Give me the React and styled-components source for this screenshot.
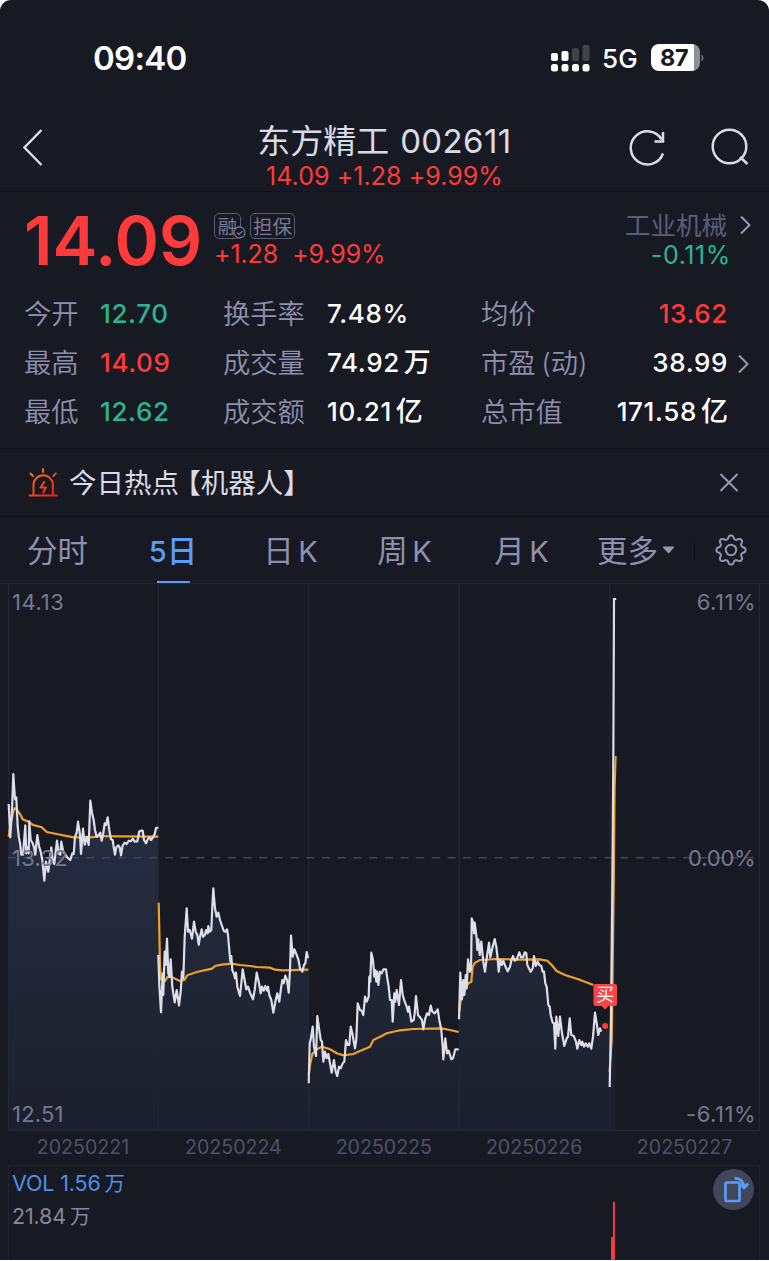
import React from 'react';
import styled, { createGlobalStyle } from 'styled-components';

const GlobalStyle = createGlobalStyle`
  * { box-sizing: border-box; }
  body {
    margin: 0;
    background: #fff;
    font-family: Inter, "Noto Sans CJK SC", sans-serif;
    -webkit-font-smoothing: antialiased;
  }
  svg { display: block; flex: none; }
`;

const colors = {
  bg: '#171a23',
  red: '#ff3a3a',
  green: '#2bb594',
  blue: '#5a9cfa',
  label: '#8f90ad',
  dim: '#5c5d78',
  light: '#d9dbe6',
};

const Page = styled.div`
  width: 769px;
  height: 1260px;
  overflow: hidden;
  background: ${colors.bg};
  border-radius: 11px 11px 0 0;
`;

const StatusBar = styled.header`
  height: 100px;
  padding: 15px 65px 0 93px;
  display: flex;
  align-items: center;
  color: #fff;
`;

const Clock = styled.div`
  font-size: 33px;
  font-weight: 600;
  letter-spacing: -0.7px;
  margin-right: auto;
`;

const Network = styled.div`
  font-size: 26px;
  font-weight: 500;
  margin: 1px 13px 0 12px;
  letter-spacing: 0.3px;
`;

const Battery = styled.div`
  width: 49px;
  height: 27px;
  border-radius: 8px;
  background: linear-gradient(90deg, #fff 87%, #8f9095 87%);
  color: ${colors.bg};
  font-size: 23.5px;
  font-weight: 700;
  line-height: 28px;
  padding-left: 9px;
  letter-spacing: -0.3px;
`;

const NavBar = styled.nav`
  height: 92px;
  padding: 0 20px 0 22px;
  display: grid;
  grid-template-columns: 118px 1fr 120px;
  border-bottom: 1px solid #11131a;
`;

const NavIcons = styled.div`
  display: flex;
  justify-content: ${(p) => p.$justify || 'flex-start'};
  padding-top: 28px;
  gap: 46px;
`;

const Title = styled.div`
  text-align: center;
  padding-top: 20px;
`;

const StockName = styled.div`
  font-size: 33px;
  line-height: 42px;
  color: ${colors.light};
  white-space: nowrap;
  word-spacing: 1.5px;
  span {
    font-size: 33px;
    letter-spacing: 0.4px;
  }
`;

const StockQuote = styled.div`
  color: ${colors.red};
  font-size: 25px;
  line-height: 29px;
  letter-spacing: 0.05px;
`;

const Summary = styled.section`
  height: 257px;
  padding: 0 16px 0 24px;
  border-bottom: 1px solid #11131a;
`;

const Headline = styled.div`
  height: 98px;
  display: flex;
`;

const BigPrice = styled.div`
  width: 190px;
  font-size: 67.5px;
  font-weight: 570;
  line-height: 98px;
  letter-spacing: -0.1px;
  color: ${colors.red};
`;

const Changes = styled.div`
  flex: 1;
  padding-top: 21px;
`;

const Tags = styled.div`
  display: flex;
  gap: 9px;
`;

const Tag = styled.span`
  position: relative;
  height: 26px;
  width: ${(p) => p.$width}px;
  border: 1.5px solid #5a5b75;
  border-radius: 5px;
  text-align: center;
  font-size: 19.5px;
  line-height: 26px;
  color: #777891;
  white-space: nowrap;
`;

const TagCheck = styled.svg`
  position: absolute;
  right: -6px;
  bottom: -1px;
`;

const Delta = styled.div`
  font-size: 25px;
  line-height: 30px;
  letter-spacing: -0.1px;
  color: ${colors.red};
  display: flex;
  gap: 14px;
`;

const SectorDelta = styled(Delta)`
  color: ${colors.green};
  line-height: 26px;
  letter-spacing: 0.6px;
  margin-right: -2px;
`;

const Sector = styled.div`
  display: grid;
  grid-template-columns: auto 23px;
  justify-items: end;
  align-content: start;
  padding: 17px 1px 0 0;
`;

const SectorName = styled.div`
  font-size: 25.5px;
  line-height: 33px;
  margin-right: 2px;
  color: ${colors.dim};
`;

const Stats = styled.div`
  display: grid;
  grid-template-columns: 76px 123px 104px 154px 108px 139px 22px;
  grid-auto-rows: 49px;
  align-items: center;
`;

const StatLabel = styled.div`
  font-size: 27.3px;
  line-height: 49px;
  color: ${colors.label};
  font-weight: 350;
  white-space: nowrap;
  word-spacing: -2px;
`;

const StatValue = styled.div`
  font-size: 26px;
  font-weight: 500;
  line-height: 48px;
  padding-bottom: 1px;
  letter-spacing: 0.65px;
  white-space: nowrap;
  color: ${(p) => colors[p.$tone] || '#fff'};
  text-align: ${(p) => (p.$right ? 'right' : 'left')};
`;

const Unit = styled.span`
  margin-left: 4px;
  font-size: 27px;
  letter-spacing: 0;
`;

const ChevronCell = styled.div`
  justify-self: end;
`;

const HotBar = styled.div`
  height: 68px;
  padding: 0 29px 0 27px;
  display: flex;
  align-items: center;
  border-bottom: 1px solid #11131a;
`;

const HotText = styled.div`
  flex: 1;
  margin-left: 10px;
  font-size: 27.5px;
  line-height: 66px;
  color: ${colors.light};
  font-feature-settings: "halt";
  span { margin-left: 8px; }
`;

const Tabs = styled.div`
  height: 66px;
  display: grid;
  grid-template-columns: 115px 116px 119px 109px 125px 91px 94px;
  align-items: center;
`;

const Tab = styled.div`
  height: 66px;
  text-align: center;
  font-size: 30.5px;
  line-height: 68px;
  white-space: nowrap;
  word-spacing: -4px;
  font-weight: ${(p) => (p.$active ? 500 : 400)};
  color: ${(p) => (p.$active ? colors.blue : colors.label)};
  span { font-size: 29px; }
  &::after {
    content: '';
    display: ${(p) => (p.$active ? 'block' : 'none')};
    width: 33px;
    height: 3px;
    margin: -5px auto 0;
    background: ${colors.blue};
  }
`;

const MoreTab = styled(Tab)`
  display: flex;
  align-items: center;
  justify-content: flex-end;
  gap: 4px;
  line-height: 66px;
  b {
    font-weight: 400;
    padding-top: 2px;
  }
`;

const Settings = styled.div`
  height: 23px;
  margin-left: 19px;
  padding-right: 2px;
  border-left: 1px solid #11131a;
  display: flex;
  align-items: center;
  justify-content: center;
`;

const ChartText = styled.text`
  font-size: ${(p) => p.$size || 22}px;
  fill: ${(p) => p.$fill || '#77788f'};
  text-anchor: ${(p) => p.$anchor || 'start'};
  letter-spacing: ${(p) => p.$spacing || 0}px;
`;

const Volume = styled.section`
  height: 96px;
  margin: 0 9px 0 8px;
  padding: 1px 5px 0 3px;
  border: 1px solid #20232f;
  border-bottom: 0;
  display: grid;
  grid-template-columns: 596px 1fr 41px;
`;

const VolText = styled.div`
  font-size: 21.5px;
  line-height: 33px;
  letter-spacing: -0.15px;
  color: ${(p) => (p.$blue ? '#4f8fe6' : '#85869b')};
`;

const VolUnit = styled.span`
  margin-left: 4px;
  font-size: 20.5px;
`;

const RotateButton = styled.button`
  width: 41px;
  height: 41px;
  margin-top: 2px;
  padding: 0;
  border: 0;
  border-radius: 50%;
  background: #424658;
`;

const stats = [
  ['今开', '12.70', 'green', '换手率', '7.48%', '均价', '13.62', 'red'],
  ['最高', '14.09', 'red', '成交量', '74.92万', '市盈 (动)', '38.99', 'white'],
  ['最低', '12.62', 'green', '成交额', '10.21亿', '总市值', '171.58亿', 'white'],
];

// Each session is stored at three units per pixel, relative to its own origin.
const sessions = [
  {
    x: 0,
    y: 760,
    price:
      '26,132 31,232 36,150 40,42 45,118 49,112 53,200 57,235 60,248 64,284 69,284 76,196 79,280 83,262 86,280 88,184 92,240 98,250 102,262 106,284 112,225 117,258 122,275 127,300 133,362 138,305 145,335 150,295 154,262 158,300 163,312 167,275 171,242 176,280 181,284 184,245 190,275 195,282 200,290 206,296 211,300 217,280 221,282 225,230 230,218 234,185 240,225 243,282 249,206 254,254 260,230 266,255 271,122 276,158 281,180 285,210 290,230 296,225 301,218 305,242 309,225 314,190 318,195 323,172 328,210 333,238 338,240 341,262 345,284 349,262 355,256 359,262 363,286 368,256 374,248 380,252 386,242 392,244 398,236 404,245 412,244 418,214 424,212 428,212 432,240 438,250 443,238 449,232 453,240 459,232 464,222 468,204 475,203',
    avg: '26,230 31,195 36,172 41,150 45,145 53,152 62,165 68,178 82,184 100,195 125,202 140,216 170,222 220,232 270,232 310,228 350,229 475,230',
  },
  {
    x: 150,
    y: 870,
    price:
      '25,255 28,345 33,427 38,310 40,375 44,245 47,285 51,206 55,310 58,320 62,268 67,350 74,397 80,360 87,406 92,365 96,305 100,325 104,200 110,115 114,185 119,180 126,206 132,155 137,185 142,195 146,224 150,200 155,178 159,200 165,195 168,180 173,190 175,168 179,185 184,180 187,110 190,55 195,115 200,140 205,128 210,150 215,165 221,182 226,185 231,178 234,195 238,240 241,275 244,258 247,300 252,312 255,325 258,308 262,350 270,378 278,298 283,325 289,358 294,350 300,368 309,388 314,360 320,308 327,340 332,370 336,350 341,362 346,348 351,362 354,350 358,375 364,390 370,428 376,395 382,370 388,395 393,355 397,330 401,340 406,317 411,330 416,368 420,300 423,197 428,260 433,238 440,255 445,268 450,295 457,305 462,285 466,280 470,246 474,265',
    avg: '26,98 28,180 30,290 33,328 45,333 52,322 62,320 75,326 90,333 103,330 112,316 140,306 186,296 195,288 215,284 245,281 270,285 300,288 320,291 360,293 375,299 400,301 475,299',
  },
  {
    x: 300,
    y: 930,
    price:
      '26,460 29,340 32,328 38,290 42,350 48,378 52,258 57,295 62,330 66,335 70,395 75,365 80,385 85,372 90,400 95,428 102,390 107,425 112,438 117,410 122,415 128,400 133,395 138,330 143,345 148,345 152,290 157,310 165,355 169,330 173,220 180,240 185,242 190,255 195,200 200,215 206,200 208,140 211,155 214,68 219,90 223,140 226,120 229,155 232,125 235,165 240,125 245,130 250,118 258,118 262,145 266,170 270,210 275,210 278,275 283,190 286,215 290,180 297,225 303,150 308,195 314,215 320,230 324,245 327,230 334,275 341,270 344,250 348,198 354,255 360,262 366,270 370,298 376,265 381,250 387,255 392,227 397,245 404,250 413,238 418,270 424,300 428,350 430,388 436,325 441,370 446,362 454,388 459,385 466,358 476,358',
    avg: '26,435 30,405 37,372 50,358 66,350 90,358 110,370 130,376 160,372 175,365 210,350 220,330 245,318 260,310 300,301 340,297 425,295 450,300 476,306',
  },
  {
    x: 450,
    y: 900,
    price:
      '27,358 31,218 36,298 40,240 43,285 47,225 50,265 54,178 60,215 63,210 65,55 70,70 72,100 74,68 80,115 82,150 85,118 89,165 94,125 100,185 105,215 110,175 117,128 121,172 127,145 134,117 139,140 142,165 146,215 151,180 156,195 160,182 166,198 173,214 180,200 184,182 189,168 194,182 200,178 208,157 213,172 219,172 224,157 229,160 232,195 242,215 248,205 252,168 257,198 263,185 268,195 274,198 278,215 282,215 286,250 290,260 295,315 299,320 302,345 308,368 312,370 316,446 319,350 325,408 330,350 336,400 343,438 350,415 354,410 359,355 364,405 371,408 378,425 382,446 388,420 394,435 397,425 402,440 407,430 413,440 418,430 424,446 429,410 435,338 440,370 445,405 450,385 454,395',
    avg: '28,335 32,300 45,270 55,250 64,245 68,200 75,188 90,180 140,177 200,179 270,178 292,182 305,195 320,213 345,225 385,238 430,255',
  },
];

const dates = ['20250221', '20250224', '20250225', '20250226', '20250227'];
const gridX = [8.5, 158.2, 308.7, 459.2, 609.7, 759.5];

function toPoints(text, session) {
  return text
    .split(' ')
    .map((pair) => {
      const [x, y] = pair.split(',').map(Number);
      return `${(session.x + x / 3).toFixed(1)},${(session.y + y / 3).toFixed(1)}`;
    })
    .join(' ');
}

function ChevronRight() {
  return (
    <svg width="12" height="32" viewBox="0 0 12 32" fill="none" stroke="#9799b2" strokeWidth="2">
      <path d="M1 7.500 9.500 16 1 24.500" />
    </svg>
  );
}

function Amount({ value }) {
  const [, number, unit] = value.match(/^([\d.%]+)(.*)$/);
  return (
    <>
      {number}
      {unit && <Unit>{unit}</Unit>}
    </>
  );
}

function Signal() {
  return (
    <svg width="40" height="28" viewBox="0 0 40 28" fill="#fff">
      <rect x="1" y="9" width="7" height="8" rx="2" />
      <rect x="11.5" y="7" width="7" height="10" rx="2" />
      <rect x="22" y="4" width="7" height="13" rx="2" fill="#41434b" />
      <rect x="32.5" y="1" width="7" height="16" rx="2" fill="#41434b" />
      {[1, 11.5, 22, 32.5].map((x) => (
        <rect key={x} x={x} y="20" width="7" height="7.5" rx="2.5" />
      ))}
    </svg>
  );
}

function Alarm() {
  return (
    <svg width="32" height="32" viewBox="0 0 32 32" fill="none" stroke="url(#alarm)" strokeWidth="2" strokeLinecap="round" strokeLinejoin="round">
      <defs>
        <linearGradient id="alarm" x1="4" y1="3" x2="28" y2="30" gradientUnits="userSpaceOnUse">
          <stop offset="0" stopColor="#f57a20" />
          <stop offset="1" stopColor="#f51a0c" />
        </linearGradient>
      </defs>
      <path d="M6.500 28V18a9.700 9.700 0 0 1 19.400 0v10M2.500 28.500H30L2.500 28.600M16 2v3M3.500 6.500 6 9M28.800 6.500 26.300 9" />
      <path d="m17.300 15-3.800 5.500h5.300l-2.500 5" />
    </svg>
  );
}

function Gear() {
  // eight rounded lobes around the hub
  const lobes = [];
  for (let i = 0; i < 96; i += 1) {
    const a = (i / 96) * Math.PI * 2;
    const wave = Math.cos(a * 8);
    const r = 12.9 + 1.7 * Math.sign(wave) * Math.pow(Math.abs(wave), 0.55);
    lobes.push(`${(16 + r * Math.sin(a)).toFixed(2)},${(16 - r * Math.cos(a)).toFixed(2)}`);
  }
  return (
    <svg width="32" height="32" viewBox="0 0 32 32" fill="none" stroke="#9597ad" strokeWidth="2" strokeLinejoin="round">
      <polygon points={lobes.join(' ')} />
      <circle cx="16" cy="16" r="5.200" />
    </svg>
  );
}

function Chart() {
  return (
    <svg width="769" height="582" viewBox="0 583 769 582">
      <defs>
        <linearGradient id="area" x1="0" y1="830" x2="0" y2="1130" gradientUnits="userSpaceOnUse">
          <stop offset="0" stopColor="#262c40" />
          <stop offset="1" stopColor="#1c202c" />
        </linearGradient>
      </defs>
      {sessions.map((s, i) => (
        <polygon
          key={s.x}
          fill="url(#area)"
          points={`${gridX[i]},1130 ${toPoints(s.price, s)} ${i === 3 ? '609.7,1027 ' : ''}${gridX[i + 1]},1130`}
        />
      ))}
      <path d="M609.700 1130V1087L612.500 880 614 599h1.500V1130z" fill="#1c202c" />
      <g stroke="#232633" strokeWidth="1.300">
        <path d="M0 583.700H769M8 1130.500H760" />
        {gridX.map((x) => (
          <path key={x} d={`M${x} 584V1130`} />
        ))}
      </g>
      <path d="M8 857.700H760" stroke="#41435a" strokeWidth="1.600" strokeDasharray="8 7.700" />
      {sessions.map((s) => (
        <polyline key={s.x} points={toPoints(s.avg, s)} fill="none" stroke="#f0a02c" strokeWidth="2.200" />
      ))}
      {sessions.map((s) => (
        <polyline key={s.x} points={toPoints(s.price, s)} fill="none" stroke="#dcdee9" strokeWidth="2.200" strokeLinejoin="round" />
      ))}
      <path d="M609.500 1072 611.800 1040 613.900 880 614.600 790 615.700 756" fill="none" stroke="#f0a02c" strokeWidth="2" />
      <path d="M609.700 1087 611 1020 612.400 880 613.300 760 614 599H616.200" fill="none" stroke="#dcdee9" strokeWidth="2.200" />
      <ChartText x="12" y="610" $spacing={0.6}>14.13</ChartText>
      <ChartText x="12" y="866" $spacing={0.2}>13.32</ChartText>
      <ChartText x="12" y="1121.500" $spacing={0.2}>12.51</ChartText>
      <ChartText x="756" y="610" $anchor="end" $spacing={0.5}>6.11%</ChartText>
      <ChartText x="755.500" y="866" $anchor="end" $spacing={-0.2}>0.00%</ChartText>
      <ChartText x="756" y="1121.500" $anchor="end" $spacing={0.5}>-6.11%</ChartText>
      {dates.map((d, i) => (
        <ChartText key={d} x={83 + i * 150.4} y="1154" $size={19.6} $anchor="middle" $fill="#505168">
          {d}
        </ChartText>
      ))}
      <path d="M595.500 984H615a2 2 0 0 1 2 2V1004a2 2 0 0 1-2 2H608.500L605 1009.500 601.500 1006H595.500a2 2 0 0 1-2-2V986a2 2 0 0 1 2-2z" fill="#fb4448" />
      <ChartText x="605.300" y="1001.300" $size={18} $fill="#fff" $anchor="middle">买</ChartText>
      <circle cx="605.200" cy="1026" r="3" fill="#fb3b41" />
    </svg>
  );
}

function App() {
  return (
    <>
      <GlobalStyle />
      <Page>
        <StatusBar>
          <Clock>09:40</Clock>
          <Signal />
          <Network>5G</Network>
          <Battery>87</Battery>
          <svg width="4" height="10" viewBox="0 0 4 10">
            <path d="M1.500 1.500Q3.500 3 3.500 5T1.500 8.500z" fill="#77797f" />
          </svg>
        </StatusBar>
        <NavBar>
          <NavIcons>
            <svg width="22" height="38" viewBox="0 0 22 38" fill="none" stroke="#d9dbe6" strokeWidth="2.500">
              <path d="M19.500 2 2.500 19.500 19.500 37" />
            </svg>
          </NavIcons>
          <Title>
            <StockName>
              东方精工 <span>002611</span>
            </StockName>
            <StockQuote>14.09 +1.28 +9.99%</StockQuote>
          </Title>
          <NavIcons $justify="flex-end">
            <svg width="36" height="40" viewBox="0 0 36 40" fill="none" stroke="#d9dbe6" strokeWidth="2.500">
              <path d="M34 25.500A16.600 16.600 0 1 1 32.700 11.500" />
              <path d="M34 4V13.500H25.500" />
            </svg>
            <svg width="38" height="40" viewBox="0 0 38 40" fill="none" stroke="#d9dbe6" strokeWidth="2.500">
              <circle cx="18.500" cy="18.500" r="16.800" />
              <path d="M29 29 36.500 36" />
            </svg>
          </NavIcons>
        </NavBar>
        <Summary>
          <Headline>
            <BigPrice>14.09</BigPrice>
            <Changes>
              <Tags>
                <Tag $width={27}>
                  融
                  <TagCheck width="13" height="13" viewBox="0 0 13 13" fill={colors.bg} stroke="#777891" strokeWidth="1.300">
                    <circle cx="6.500" cy="6.500" r="5.500" />
                    <path d="m4 6.500 2 2 3.500-3.500" fill="none" />
                  </TagCheck>
                </Tag>
                <Tag $width={45}>担保</Tag>
              </Tags>
              <Delta>
                <span>+1.28</span>
                <span>+9.99%</span>
              </Delta>
            </Changes>
            <Sector>
              <SectorName>工业机械</SectorName>
              <ChevronRight />
              <SectorDelta>-0.11%</SectorDelta>
            </Sector>
          </Headline>
          <Stats>
            {stats.map(([l1, v1, tone1, l2, v2, l3, v3, tone3]) => (
              <React.Fragment key={l1}>
                <StatLabel>{l1}</StatLabel>
                <StatValue $tone={tone1}>{v1}</StatValue>
                <StatLabel>{l2}</StatLabel>
                <StatValue><Amount value={v2} /></StatValue>
                <StatLabel>{l3}</StatLabel>
                <StatValue $tone={tone3} $right><Amount value={v3} /></StatValue>
                <ChevronCell>{l1 === '最高' && <ChevronRight />}</ChevronCell>
              </React.Fragment>
            ))}
          </Stats>
        </Summary>
        <HotBar>
          <Alarm />
          <HotText>今日热点<span>【机器人】</span></HotText>
          <svg width="22" height="22" viewBox="0 0 22 22" stroke="#9799b2" strokeWidth="2">
            <path d="m2.500 2 17 17M19.500 2l-17 17" />
          </svg>
        </HotBar>
        <Tabs>
          <Tab>分时</Tab>
          <Tab $active><span>5</span>日</Tab>
          <Tab>日 <span>K</span></Tab>
          <Tab>周 <span>K</span></Tab>
          <Tab>月 <span>K</span></Tab>
          <MoreTab>
            <b>更多</b>
            <svg width="13" height="8" viewBox="0 0 13 8" fill="#9799b2">
              <path d="M1.500.5h10q1 .5.300 1.300L7.500 6.500q-1 1-2 0L1.200 1.800Q.5 1 1.500.5z" />
            </svg>
          </MoreTab>
          <Settings>
            <Gear />
          </Settings>
        </Tabs>
        <Chart />
        <Volume>
          <div>
            <VolText $blue>VOL 1.56<VolUnit>万</VolUnit></VolText>
            <VolText>21.84<VolUnit>万</VolUnit></VolText>
          </div>
          <svg width="20" height="94" viewBox="0 0 20 94">
            <path d="M3 70H5V35H7V94H3z" fill="#f43a3c" />
          </svg>
          <RotateButton aria-label="rotate">
            <svg width="41" height="41" viewBox="0 0 41 41" fill="none" stroke={colors.blue} strokeWidth="2.700" strokeLinejoin="round">
              <rect x="12.500" y="13.500" width="14" height="18.500" rx="1.500" />
              <path d="M21.500 9.200Q30 9 31 18.500M27.500 15 31 19 35 14.500" />
            </svg>
          </RotateButton>
        </Volume>
      </Page>
    </>
  );
}

export default App;
